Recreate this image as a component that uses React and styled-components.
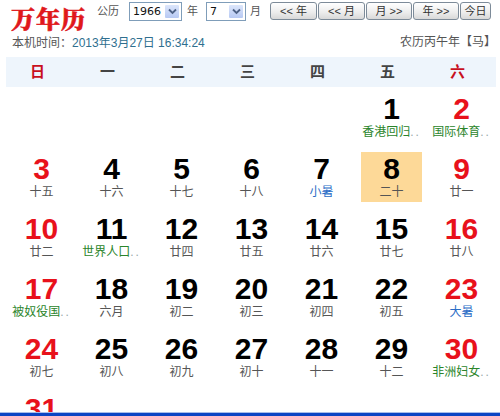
import React from "react";
import styled, { createGlobalStyle } from "styled-components";

const Global = createGlobalStyle`
  html, body { margin: 0; padding: 0; background: #fff; }
  body { font-family: "Liberation Sans", "Noto Sans CJK SC", sans-serif; overflow: hidden; }
`;

const CJK = `"Liberation Sans", "Noto Sans CJK SC", sans-serif`;

const Page = styled.div`
  width: 500px;
  height: 416px;
  overflow: hidden;
`;

const TopBar = styled.div`
  display: flex;
  align-items: flex-start;
  height: 30px;
  padding: 2px 0 0 11px;
  box-sizing: border-box;
`;

const Logo = styled.div`
  font-family: "Noto Serif CJK SC", "Noto Sans CJK SC", serif;
  font-weight: 900;
  font-size: 24px;
  line-height: 26px;
  color: #e0181c;
  -webkit-text-stroke: 0.6px #e0181c;
  margin-top: 3px;
  letter-spacing: 1px;
`;

const Label = styled.span`
  font-family: ${CJK};
  font-size: 11px;
  line-height: 19px;
  color: #555;
  margin-left: ${(p) => p.$ml}px;
`;

const Select = styled.div`
  display: flex;
  align-items: stretch;
  width: ${(p) => p.$w}px;
  height: 19px;
  box-sizing: border-box;
  border: 1px solid #7f9db9;
  background: #fff;
  margin-left: ${(p) => p.$ml}px;
`;

const SelectValue = styled.span`
  flex: 1;
  font-family: "DejaVu Sans", "Liberation Sans", sans-serif;
  font-size: 11px;
  line-height: 17px;
  padding-left: 3px;
  color: #111;
`;

const SelectArrow = styled.span`
  width: 16px;
  margin: 1px;
  box-sizing: border-box;
  border: 1px solid #fff;
  border-radius: 2px;
  background: linear-gradient(#dce6fb, #b7c9f3);
  display: flex;
  align-items: center;
  justify-content: center;
`;

const Buttons = styled.div`
  display: flex;
  gap: 1px;
  margin-left: 9px;
`;

const Btn = styled.div`
  width: ${(p) => p.$w}px;
  height: 18px;
  box-sizing: border-box;
  border: 1px solid #7d8b99;
  border-radius: 3px;
  background: linear-gradient(#ffffff, #ececec 60%, #d8d8d8);
  font-family: ${CJK};
  font-size: 11px;
  line-height: 16px;
  color: #333;
  text-align: center;
  white-space: pre;
`;

const InfoRow = styled.div`
  display: flex;
  justify-content: space-between;
  align-items: flex-start;
  height: 27px;
  padding: 4px 4px 0 12px;
  box-sizing: border-box;
  font-family: ${CJK};
  font-size: 12px;
  line-height: 16px;
  color: #555;
`;

const Now = styled.span`
  padding-top: 1px;
`;

const Stamp = styled.span`
  color: #2f6f8f;
`;

const Zodiac = styled.span`
  color: #555;
`;

const Calendar = styled.div`
  width: 490px;
  margin: 0 0 0 6px;
`;

const WeekHead = styled.div`
  display: grid;
  grid-template-columns: repeat(7, 70px);
  height: 30px;
  background: #eef5fc;
`;

const WeekDay = styled.div`
  font-family: ${CJK};
  font-weight: bold;
  font-size: 15px;
  line-height: 30px;
  text-align: center;
  padding-right: 7px;
  color: ${(p) => (p.$weekend ? "#c8101e" : "#444")};
`;

const Grid = styled.div`
  display: grid;
  grid-template-columns: repeat(7, 70px);
  grid-auto-rows: 60px;
`;

const Cell = styled.div`
  margin: 5px 4px 5px 5px;
  padding-top: 2px;
  box-sizing: border-box;
  height: 50px;
  text-align: center;
  background: ${(p) => (p.$today ? "#fdd998" : "transparent")};
`;

const DayNum = styled.div`
  font-family: "Liberation Sans", Arial, sans-serif;
  font-weight: bold;
  font-size: 30px;
  line-height: 30px;
  color: ${(p) => (p.$weekend ? "#e8111b" : "#000")};
`;

const tone = { plain: "#555", fest: "#2b852b", term: "#2a6dc6" };

const Lunar = styled.div`
  font-family: ${CJK};
  font-size: 12px;
  line-height: 16px;
  white-space: nowrap;
  color: ${(p) => tone[p.$kind]};
`;

const Dots = styled.span`
  color: #9aa;
  letter-spacing: 2px;
`;

const TaskEdge = styled.div`
  position: fixed;
  left: 0;
  right: 0;
  bottom: 0;
  height: 3px;
  background: #0c45c4;
  box-shadow: 0 -1px 0 #a9bde9;
`;

const Chevron = () => (
  <svg width="9" height="7" viewBox="0 0 9 7">
    <path d="M1 1.5 L4.5 5 L8 1.5" fill="none" stroke="#4d6185" strokeWidth="1.8" />
  </svg>
);

const weekdays = ["日", "一", "二", "三", "四", "五", "六"];

const days = [
  null, null, null, null, null,
  [1, "香港回归", "fest"], [2, "国际体育", "fest"],
  [3, "十五"], [4, "十六"], [5, "十七"], [6, "十八"], [7, "小暑", "term"], [8, "二十"], [9, "廿一"],
  [10, "廿二"], [11, "世界人口", "fest"], [12, "廿四"], [13, "廿五"], [14, "廿六"], [15, "廿七"], [16, "廿八"],
  [17, "被奴役国", "fest"], [18, "六月"], [19, "初二"], [20, "初三"], [21, "初四"], [22, "初五"], [23, "大暑", "term"],
  [24, "初七"], [25, "初八"], [26, "初九"], [27, "初十"], [28, "十一"], [29, "十二"], [30, "非洲妇女", "fest"],
  [31, "十四"],
];

export default function App() {
  return (
    <Page>
      <Global />
      <TopBar>
        <Logo>万年历</Logo>
        <Label $ml={11}>公历</Label>
        <Select $w={53} $ml={10}>
          <SelectValue>1966</SelectValue>
          <SelectArrow><Chevron /></SelectArrow>
        </Select>
        <Label $ml={5}>年</Label>
        <Select $w={40} $ml={8}>
          <SelectValue>7</SelectValue>
          <SelectArrow><Chevron /></SelectArrow>
        </Select>
        <Label $ml={4}>月</Label>
        <Buttons>
          <Btn $w={47}>{"<< 年"}</Btn>
          <Btn $w={47}>{"<< 月"}</Btn>
          <Btn $w={46}>{"月 >>"}</Btn>
          <Btn $w={46}>{"年 >>"}</Btn>
          <Btn $w={31}>今日</Btn>
        </Buttons>
      </TopBar>
      <InfoRow>
        <Now>
          本机时间：<Stamp>2013年3月27日 16:34:24</Stamp>
        </Now>
        <Zodiac>农历丙午年【马】</Zodiac>
      </InfoRow>
      <Calendar>
        <WeekHead>
          {weekdays.map((w, i) => (
            <WeekDay key={w} $weekend={i === 0 || i === 6}>{w}</WeekDay>
          ))}
        </WeekHead>
        <Grid>
          {days.map((d, i) => {
            if (!d) return <div key={"e" + i} />;
            const [n, text, kind = "plain"] = d;
            const col = i % 7;
            return (
              <Cell key={n} $today={n === 8}>
                <DayNum $weekend={col === 0 || col === 6}>{n}</DayNum>
                <Lunar $kind={kind}>
                  {text}
                  {kind === "fest" && <Dots>..</Dots>}
                </Lunar>
              </Cell>
            );
          })}
        </Grid>
      </Calendar>
      <TaskEdge />
    </Page>
  );
}
